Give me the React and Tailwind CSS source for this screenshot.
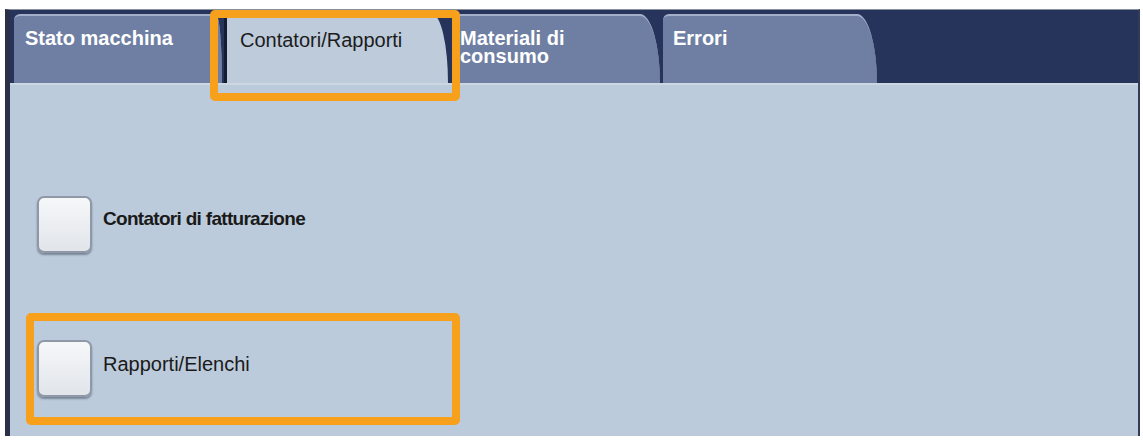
import React from 'react';

const font = { fontFamily: '"Liberation Sans", Arial, sans-serif' };

const TouchButton = () => (
  <div className="w-[55px] h-[57px] shrink-0 rounded-[7px] border-2 border-[#8e98a6] bg-linear-to-b from-[#f6f7f9] to-[#e1e5ea] shadow-[0_2px_2px_rgba(40,50,70,0.45)]" />
);

export default function App() {
  return (
    <div className="relative w-[1143px] h-[440px] bg-white overflow-hidden pl-[5px] pt-[9px]" style={font}>
      {/* pannello */}
      <div className="w-[1135px] h-[427px] flex flex-col border-t border-t-[#8a909c] border-l-[5px] border-l-[#2a3146] border-r-[2px] border-r-[#323c56]">
        {/* schede */}
        <div className="h-[73px] bg-[#26335a] flex items-end pl-[4px]">
          <div className="w-[208px] h-[69px] rounded-tl-[6px] rounded-tr-[6px_69px] bg-[#6f7fa4] border-t-2 border-t-[#a3afcb] pl-[11px] pt-[10px]">
            <span className="text-[20px] leading-[24px] font-bold text-white">Stato macchina</span>
          </div>
          <div className="ml-[2px] w-[224px] h-[69px] rounded-tl-[5px] rounded-tr-[16px_69px] bg-[#bdcbdb] border-l-[3px] border-l-[#141c33] pl-[13px] pt-[14px]">
            <span className="text-[20px] leading-[24px] text-[#1c1c1c]">Contatori/Rapporti</span>
          </div>
          <div className="ml-[4px] w-[208px] h-[69px] rounded-tl-[6px] rounded-tr-[20px_69px] bg-[#6f7fa4] border-t-2 border-t-[#a3afcb] pl-[8px] pt-[13px]">
            <div className="text-[20px] leading-[18px] font-bold text-white">
              Materiali di
              <br />
              consumo
            </div>
          </div>
          <div className="ml-[3px] w-[214px] h-[69px] rounded-tl-[6px] rounded-tr-[20px_69px] bg-[#6f7fa4] border-t-2 border-t-[#a3afcb] pl-[10px] pt-[10px]">
            <span className="text-[20px] leading-[24px] font-bold text-white">Errori</span>
          </div>
        </div>
        <div className="h-[2px] bg-[#cdd7e3]" />

        {/* contenuto */}
        <div className="flex-1 bg-[#bccbdb] pl-[27px] pt-[111px] flex flex-col">
          <div className="flex items-center gap-[11px]">
            <TouchButton />
            <span className="mb-[12px] text-[19px] leading-[22px] font-bold tracking-[-0.7px] text-[#1a1a1a]">
              Contatori di fatturazione
            </span>
          </div>
          <div className="mt-[87px] flex items-center gap-[11px]">
            <TouchButton />
            <span className="mb-[10px] text-[20px] leading-[24px] text-[#1a1a1a]">Rapporti/Elenchi</span>
          </div>
        </div>
      </div>

      {/* evidenziazioni */}
      <div className="absolute left-[210px] top-[10px] w-[250px] h-[91px] border-[8px] border-[#f6a01b] rounded-[5px]" />
      <div className="absolute left-[26px] top-[313px] w-[434px] h-[112px] border-[8px] border-[#f6a01b] rounded-[5px]" />
    </div>
  );
}
